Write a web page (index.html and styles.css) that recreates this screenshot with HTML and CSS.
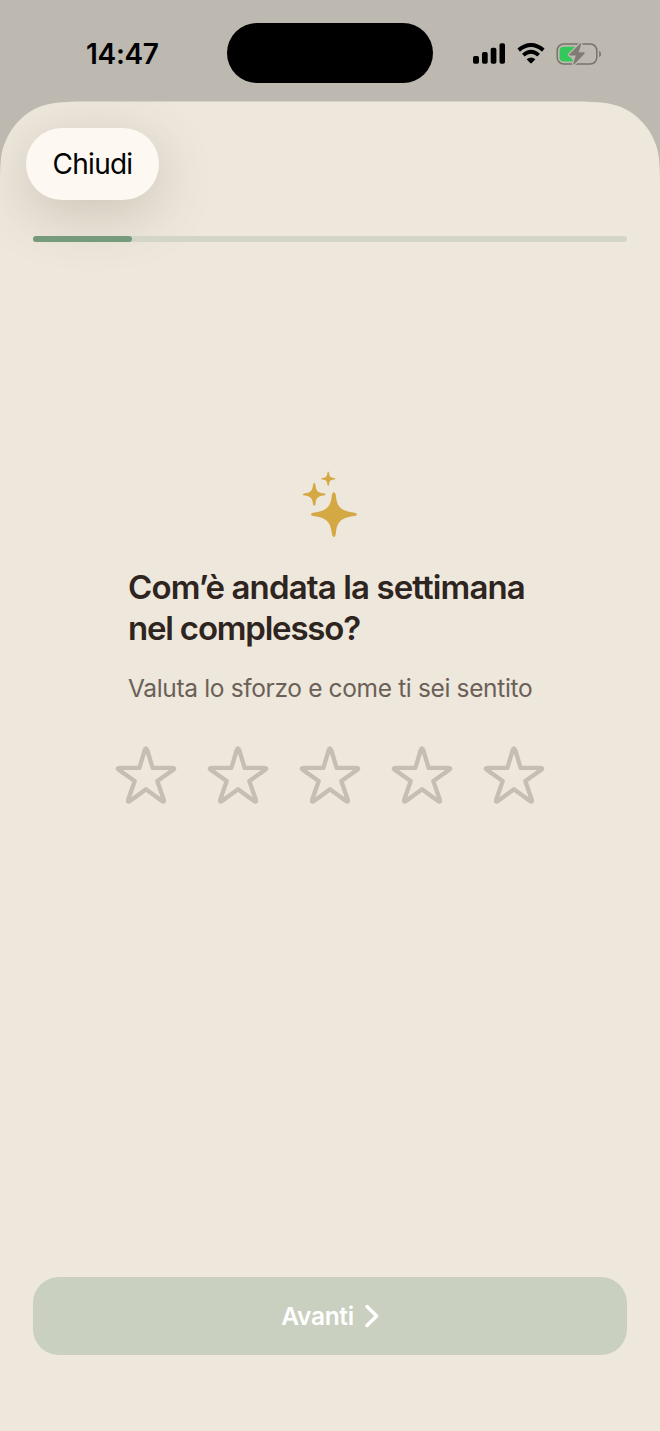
FILE: index.html
```html
<!DOCTYPE html>
<html lang="it">
<head>
<meta charset="utf-8">
<title>Valutazione settimanale</title>
<link rel="stylesheet" href="styles.css">
</head>
<body>
<div class="screen">
  <header class="status">
    <div class="time"><span>14:47</span></div>
    <div class="island"></div>
    <div class="indicators">
      <svg class="signal" width="32" height="21" viewBox="0 0 32 21">
        <rect x="0" y="13" width="6" height="7.7" rx="1.8"/>
        <rect x="9" y="9" width="5.7" height="11.7" rx="1.8"/>
        <rect x="17.7" y="4.8" width="5.7" height="15.9" rx="1.8"/>
        <rect x="26.5" y="0.3" width="5.5" height="20.4" rx="1.8"/>
      </svg>
      <svg class="wifi" width="28" height="21" viewBox="0 0 28 21">
        <path d="M1.7 7.1 Q14 -3.1 26.3 7.1" fill="none" stroke="#000" stroke-width="4"/>
        <path d="M6.3 12.1 Q14 5.4 21.7 12.1" fill="none" stroke="#000" stroke-width="3.8"/>
        <path d="M9.6 16.2 Q14 12.6 18.4 16.2 L14.8 20 Q14 20.8 13.2 20 Z"/>
      </svg>
      <svg class="battery" width="46" height="24" viewBox="0 0 46 24">
        <rect x="1.2" y="2" width="39.6" height="20" rx="6.5" fill="none" stroke="#77736b" stroke-width="1.5"/>
        <path d="M43.2 8.8 Q45 9.8 45 12 Q45 14.2 43.2 15.2 Z" fill="#77736b"/>
        <path d="M8 4.7 H20.5 L13 13.5 L18 19.5 H8 Q3.6 19.5 3.6 15.5 V8.7 Q3.6 4.7 8 4.7 Z" fill="#34c759"/>
        <path d="M24.2 1.5 L13.4 12.2 Q12.6 13.6 14.1 13.6 H19.7 L17.3 21.6 Q17.1 23.3 18.3 22.3 L28.5 11.7 Q29.3 10.5 27.8 10.3 H22.7 L25.2 2.3 Q25.2 .8 24.2 1.5 Z" fill="#807c74" stroke="#bdb8b0" stroke-width="2.6" paint-order="stroke"/>
      </svg>
    </div>
  </header>

  <main class="sheet">
    <button class="close"><span>Chiudi</span></button>
    <div class="progress"><div class="progress-fill"></div></div>

    <section class="question">
      <svg class="sparkles" width="56" height="68" viewBox="0 0 56 68">
        <path d="M31.8 21.3 Q33.5 21.3 33.9 25 C35 36 39 40 52.5 41.8 Q54.8 42.2 54.8 43.4 Q54.8 44.7 52.5 45 C39 46.6 35 51 33.9 62 Q33.4 66 31.8 66 Q30.3 66 29.8 62 C28.6 51 24.5 46.6 11.3 45 Q9 44.7 9 43.4 Q9 42.2 11.3 41.8 C24.5 40 28.6 36 29.8 25 Q30.2 21.3 31.8 21.3 Z"/>
        <path d="M12.2 12 Q13.3 12 13.5 14.2 C14 19.8 16 21.8 21.5 22.3 Q23.5 22.5 23.5 23.5 Q23.5 24.4 21.5 24.6 C16 25.2 14 27.2 13.5 32.8 Q13.3 34.8 12.2 34.8 Q11.2 34.8 11 32.8 C10.3 27.2 8.3 25.2 2.8 24.6 Q.9 24.4 .9 23.5 Q.9 22.5 2.8 22.3 C8.3 21.8 10.3 19.8 11 14.2 Q11.2 12 12.2 12 Z"/>
        <path d="M26.2 .4 Q27 .4 27.1 2 C27.4 5.5 28.5 6.6 32 7 Q33.4 7.1 33.4 7.8 Q33.4 8.4 32 8.5 C28.5 8.9 27.4 10 27.1 13.4 Q27 14.8 26.2 14.8 Q25.5 14.8 25.4 13.4 C25 10 23.9 8.9 20.6 8.5 Q19.2 8.4 19.2 7.8 Q19.2 7.1 20.6 7 C23.9 6.6 25 5.5 25.4 2 Q25.5 .4 26.2 .4 Z"/>
      </svg>
      <div class="copy">
        <h1><span class="line-a">Com’è andata la settimana</span><br><span class="line-b">nel complesso?</span></h1>
        <p><span>Valuta lo sforzo e come ti sei sentito</span></p>
      </div>
      <svg width="0" height="0" class="defs">
        <symbol id="star" viewBox="0 0 62 60">
          <path d="M29.8 4.8 Q31 1.9 32.2 4.8 L37.6 22.9 H57 Q60.7 23 58 25 L42.3 36 L48.8 54.7 Q49.6 57.8 47 56 L31 44.2 L15 56 Q12.4 57.8 13.2 54.7 L19.7 36 L4 25 Q1.3 23 5 22.9 H24.4 Z" fill="none" stroke="#c6beb3" stroke-width="4.3" stroke-linejoin="round"/>
        </symbol>
      </svg>
      <div class="stars">
        <svg><use href="#star"/></svg>
        <svg><use href="#star"/></svg>
        <svg><use href="#star"/></svg>
        <svg><use href="#star"/></svg>
        <svg><use href="#star"/></svg>
      </div>
    </section>

    <button class="next">
      <span>Avanti</span>
      <svg width="14" height="24" viewBox="0 0 14 24"><path d="M2 2.5 L11.6 12 L2 21.5" fill="none" stroke="#fff" stroke-width="3.4" stroke-linecap="round" stroke-linejoin="round"/></svg>
    </button>
  </main>
</div>
</body>
</html>
```
FILE: styles.css
```css
* { box-sizing: border-box; }
body {
  margin: 0;
  background: #bdb8b0;
  font-family: Inter, "Liberation Sans", sans-serif;
}
.screen {
  width: 660px;
  height: 1431px;
  display: flex;
  flex-direction: column;
  overflow: hidden;
}
.status {
  height: 101px;
  flex: none;
  display: grid;
  grid-template-columns: 227px 206px 227px;
  padding-top: 23px;
}
.time {
  height: 61px;
  padding-left: 86px;
  font-size: 28px;
  font-weight: 600;
  line-height: 62px;
  letter-spacing: -0.3px;
}
.island {
  height: 60px;
  border-radius: 30px;
  background: #000;
}
.indicators {
  height: 61px;
  padding-left: 40px;
  display: flex;
  align-items: center;
}
.wifi { margin-left: 12px; }
.battery { margin-left: 11px; }
.sheet {
  flex: 1;
  display: flex;
  flex-direction: column;
  align-items: stretch;
  padding: 27px 33px 76px;
  background: #eee7dc;
  clip-path: path("M0 83 C0 62 1 52 4 44 C9 30 17 20 28 12 C40 4 52 .5 82 .5 H578 C608 .5 620 4 632 12 C643 20 651 30 656 44 C659 52 660 62 660 83 V1330 H0 Z");
}
button {
  border: 0;
  padding: 0;
  font-family: inherit;
}
.close {
  width: 133px;
  height: 72px;
  margin-left: -7px;
  border-radius: 36px;
  background: #fdf9f2;
  color: #000;
  font-size: 28px;
  line-height: 73px;
  letter-spacing: -0.75px;
  box-shadow: 0 14px 56px rgba(80, 75, 50, 0.22);
}
.progress {
  height: 6px;
  margin-top: 36px;
  border-radius: 3px;
  background: #d3d6c7;
  position: relative;
}
.progress-fill {
  width: 99px;
  height: 6px;
  border-radius: 3px;
  background: #769b7c;
}
.question {
  display: flex;
  flex-direction: column;
  align-items: center;
  margin-top: 229px;
}
.sparkles { fill: #d4a843; }
.copy {
  width: 404px;
  margin-top: 28px;
  white-space: nowrap;
}
h1 {
  margin: 0;
  color: #2e2420;
  font-size: 33px;
  font-weight: 600;
  line-height: 41px;
  letter-spacing: -0.88px;
}
.line-b { letter-spacing: -1.2px; }
p {
  margin: 23px 0 0;
  color: #6b6058;
  font-size: 24.5px;
  line-height: 32px;
  letter-spacing: -0.35px;
}
.defs { position: absolute; }
.stars {
  display: flex;
  gap: 30px;
  margin-top: 41px;
}
.stars svg {
  width: 62px;
  height: 60px;
}
.next {
  height: 78px;
  margin-top: auto;
  border-radius: 26px;
  background: #cad0bf;
  color: #fff;
  display: flex;
  align-items: center;
  justify-content: center;
  gap: 11px;
  font-size: 24.5px;
  font-weight: 600;
  letter-spacing: -0.3px;
}
```
